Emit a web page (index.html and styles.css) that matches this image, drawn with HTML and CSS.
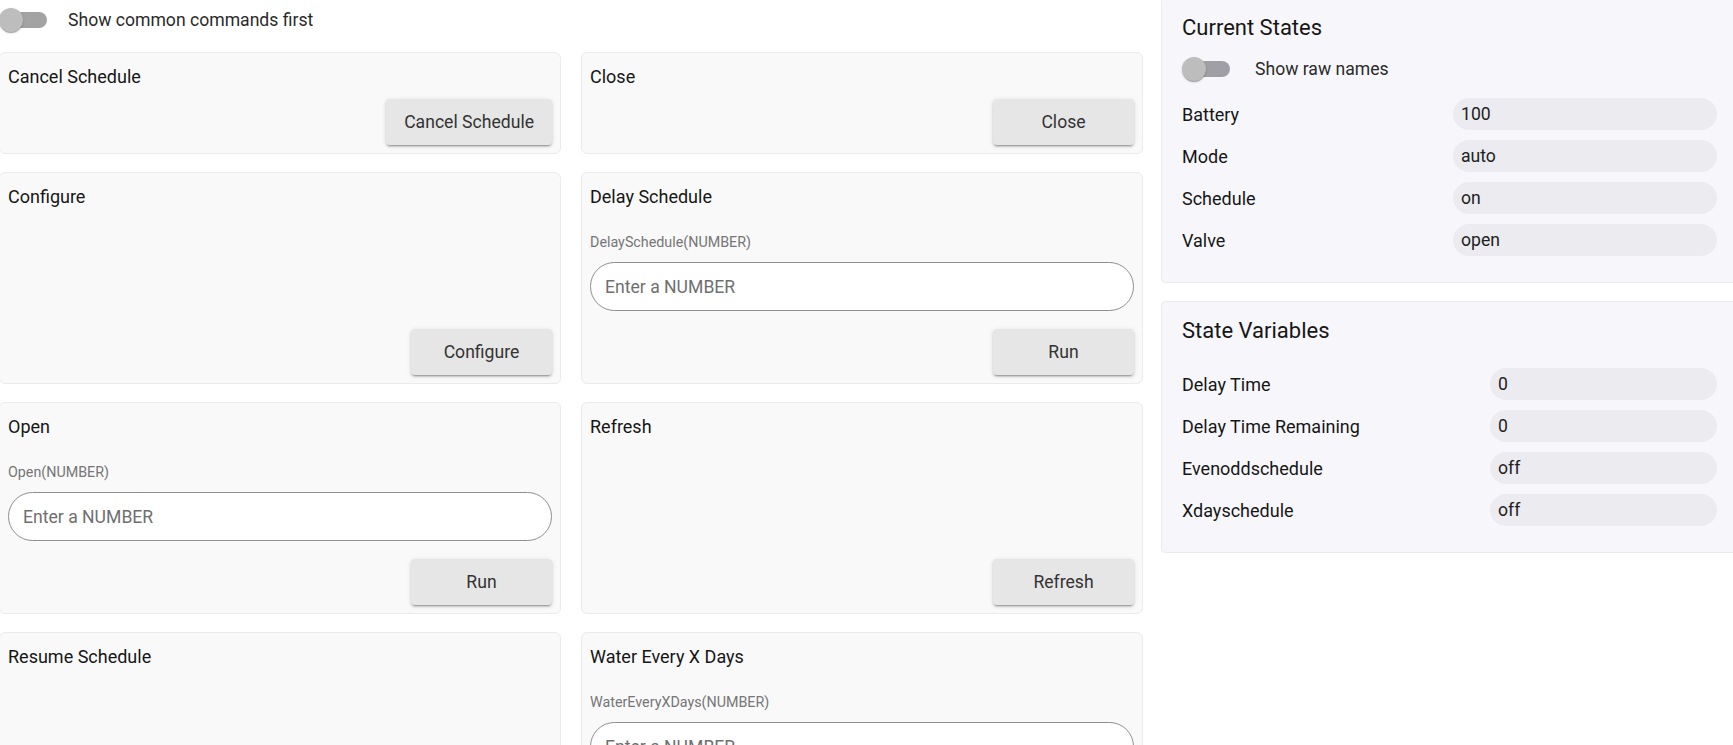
FILE: index.html
```html
<!DOCTYPE html>
<html lang="en">
<head>
<meta charset="utf-8">
<title>Device commands</title>
<link rel="stylesheet" href="styles.css">
</head>
<body>
<div class="page">
  <main class="commands-area">
    <div class="toggle-row">
      <span class="switch"><span class="track"></span><span class="thumb"></span></span>
      <span class="toggle-label">Show common commands first</span>
    </div>
    <div class="commands">
      <section class="card">
        <h3 class="card-title">Cancel Schedule</h3>
        <div class="actions"><button class="btn">Cancel Schedule</button></div>
      </section>
      <section class="card">
        <h3 class="card-title">Close</h3>
        <div class="actions"><button class="btn">Close</button></div>
      </section>
      <section class="card">
        <h3 class="card-title">Configure</h3>
        <div class="actions"><button class="btn">Configure</button></div>
      </section>
      <section class="card">
        <h3 class="card-title">Delay Schedule</h3>
        <label class="param-label">DelaySchedule(NUMBER)</label>
        <input class="param-input" type="text" placeholder="Enter a NUMBER">
        <div class="actions actions-param"><button class="btn">Run</button></div>
      </section>
      <section class="card">
        <h3 class="card-title">Open</h3>
        <label class="param-label">Open(NUMBER)</label>
        <input class="param-input" type="text" placeholder="Enter a NUMBER">
        <div class="actions actions-param"><button class="btn">Run</button></div>
      </section>
      <section class="card">
        <h3 class="card-title">Refresh</h3>
        <div class="actions"><button class="btn">Refresh</button></div>
      </section>
      <section class="card">
        <h3 class="card-title">Resume Schedule</h3>
        <div class="actions"><button class="btn">Resume Schedule</button></div>
      </section>
      <section class="card">
        <h3 class="card-title">Water Every X Days</h3>
        <label class="param-label">WaterEveryXDays(NUMBER)</label>
        <input class="param-input" type="text" placeholder="Enter a NUMBER">
        <div class="actions actions-param"><button class="btn">Run</button></div>
      </section>
    </div>
  </main>
  <aside class="side">
    <section class="panel">
      <h2 class="panel-title">Current States</h2>
      <div class="toggle-row toggle-row-panel">
        <span class="switch switch-panel"><span class="track"></span><span class="thumb"></span></span>
        <span class="toggle-label toggle-label-panel">Show raw names</span>
      </div>
      <div class="kv kv-states">
        <span class="kv-key">Battery</span><span class="kv-val">100</span>
        <span class="kv-key">Mode</span><span class="kv-val">auto</span>
        <span class="kv-key">Schedule</span><span class="kv-val">on</span>
        <span class="kv-key">Valve</span><span class="kv-val">open</span>
      </div>
    </section>
    <section class="panel">
      <h2 class="panel-title">State Variables</h2>
      <div class="kv kv-vars">
        <span class="kv-key">Delay Time</span><span class="kv-val">0</span>
        <span class="kv-key">Delay Time Remaining</span><span class="kv-val">0</span>
        <span class="kv-key">Evenoddschedule</span><span class="kv-val">off</span>
        <span class="kv-key">Xdayschedule</span><span class="kv-val">off</span>
      </div>
    </section>
  </aside>
</div>
</body>
</html>
```
FILE: styles.css
```css
html, body {
  margin: 0;
  padding: 0;
  overflow: hidden;
  background: #ffffff;
}

body {
  font-family: Roboto, "Noto Sans", "Liberation Sans", sans-serif;
  color: #222222;
  font-size: 17.6px;
}

.page {
  display: grid;
  grid-template-columns: 1144px 1fr;
  column-gap: 18px;
  margin-left: -1px;
  margin-right: -4px;
  align-items: start;
}

/* toggles */
.toggle-row {
  display: flex;
  align-items: center;
  height: 40px;
}

.switch {
  position: relative;
  display: inline-block;
  width: 48px;
  height: 24px;
  flex: none;
}

.switch .track {
  position: absolute;
  left: 10px;
  top: 4px;
  width: 38px;
  height: 16px;
  border-radius: 8px;
  background: #a3a3a3;
}

.switch .thumb {
  position: absolute;
  left: 0;
  top: 0;
  width: 24px;
  height: 24px;
  border-radius: 50%;
  background: #bdbdbd;
  box-shadow: 0 2px 1px -1px rgba(0,0,0,0.2), 0 1px 1px 0 rgba(0,0,0,0.14), 0 1px 3px 0 rgba(0,0,0,0.12);
}

.switch-panel .track {
  background: #a19fa6;
}

.toggle-label {
  margin-left: 21px;
  color: #2a2a2a;
  font-size: 17.6px;
}

.toggle-label-panel {
  margin-left: 25px;
}

/* command cards */
.commands {
  display: grid;
  grid-template-columns: 1fr 1fr;
  column-gap: 20px;
  row-gap: 18px;
  margin-top: 12px;
}

.card {
  display: flex;
  flex-direction: column;
  background: #f9f9f9;
  border: 1px solid #ebebeb;
  border-radius: 6px;
  padding: 14px 8px 8px 8px;
}

.card-title {
  margin: 0;
  font-size: 18px;
  font-weight: 400;
  line-height: 20px;
  color: #161616;
}

.param-label {
  display: block;
  margin-top: 27px;
  font-size: 14.3px;
  line-height: 17px;
  color: #767676;
}

.param-input {
  margin-top: 11px;
  height: 49px;
  box-sizing: border-box;
  border: 1px solid #8f8f8f;
  border-radius: 25px;
  background: #ffffff;
  padding: 0 14px;
  font-family: inherit;
  font-size: 17.6px;
  color: #222222;
  outline: none;
}

.param-input::placeholder {
  color: #6f6f6f;
}

.actions {
  display: flex;
  justify-content: flex-end;
  margin-top: auto;
  padding-top: 12px;
}

.actions-param {
  padding-top: 18px;
}

.btn {
  min-width: 141px;
  height: 46px;
  padding: 0 18px;
  border: none;
  border-radius: 4px;
  background: #e6e6e6;
  color: #333333;
  font-family: inherit;
  font-size: 17.6px;
  box-shadow: 0 3px 1px -2px rgba(0,0,0,0.2), 0 2px 2px 0 rgba(0,0,0,0.14), 0 1px 5px 0 rgba(0,0,0,0.12);
}

/* side panels */
.side {
  display: flex;
  flex-direction: column;
  gap: 18px;
  margin-top: -2px;
}

.panel {
  background: #f7f7fb;
  border: 1px solid #ebebef;
  border-radius: 4px;
  padding: 16px 19px 26px 20px;
}

.panel-title {
  margin: 0;
  font-size: 22px;
  font-weight: 400;
  line-height: 26px;
  color: #161616;
}

.toggle-row-panel {
  height: 34px;
  margin-top: 11px;
}

.kv {
  display: grid;
  row-gap: 10px;
  align-items: center;
}

.kv-states {
  grid-template-columns: 271px 1fr;
  margin-top: 12px;
}

.kv-vars {
  grid-template-columns: 308px 1fr;
  margin-top: 24px;
}

.kv-key {
  font-size: 18px;
  font-weight: 400;
  color: #161616;
}

.kv-val {
  height: 32px;
  line-height: 32px;
  border-radius: 16px;
  background: #ebebf0;
  padding: 0 8px;
  font-size: 17.6px;
  color: #222222;
}
```
